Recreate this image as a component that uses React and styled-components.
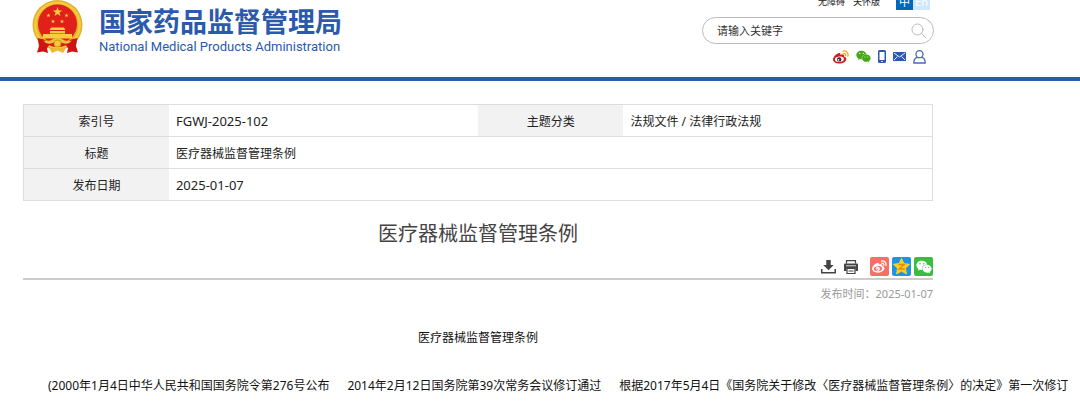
import React from "react";
import styled, { createGlobalStyle } from "styled-components";
import { FaWeixin } from "react-icons/fa";

const GlobalStyle = createGlobalStyle`
  * { box-sizing: border-box; }
  body {
    margin: 0;
    background: #fff;
    color: #222;
    font: 12px/24px "Noto Sans", "Noto Sans CJK SC", sans-serif;
    overflow: hidden;
  }
  a { color: inherit; text-decoration: none; }
`;

const Header = styled.header`
  border-bottom: 4px solid #2b5aab;
  padding: 0 146px 13px 23px;
  overflow: hidden;
`;

const HeaderInner = styled.div`
  display: flex;
  justify-content: space-between;
  align-items: flex-start;
`;

const Brand = styled.a`
  display: flex;
  align-items: flex-start;
  gap: 16px;
  padding-left: 9px;
  color: #2b5aab;
`;

const BrandText = styled.span`
  display: flex;
  flex-direction: column;
  padding-top: 4px;
  white-space: nowrap;
`;

const BrandName = styled.strong`
  font: 700 27px/34px "Noto Sans CJK SC", sans-serif;
`;

const BrandEnglish = styled.span`
  font: 400 13px/18px Roboto, "Liberation Sans", sans-serif;
`;

const Side = styled.div`
  display: flex;
  flex-direction: column;
  align-items: flex-end;
  width: 232px;
`;

const Utility = styled.nav`
  display: flex;
  align-items: center;
  gap: 8px;
  height: 16px;
  margin-top: -6px;
  padding-right: 4px;
  font-size: 9px;
  line-height: 16px;
`;

const Languages = styled.span`
  display: flex;
  margin-left: 8px;
`;

const Language = styled.a`
  width: 17px;
  text-align: center;
  font-size: 11px;
  color: #fff;
  background: ${(p) => (p.$active ? "#0068b7" : "#cfe8ff")};
`;

const SearchForm = styled.form`
  display: flex;
  align-items: center;
  width: 100%;
  height: 27px;
  margin-top: 7px;
  padding: 0 6px 0 14px;
  border: 1px solid #bbb;
  border-radius: 14px;
`;

const SearchInput = styled.input`
  flex: 1;
  min-width: 0;
  height: 20px;
  padding: 0 0 2px;
  border: 0;
  outline: 0;
  background: transparent;
  font: 11px/18px "Noto Sans CJK SC", sans-serif;
  &::placeholder { color: #333; opacity: 1; }
`;

const IconButton = styled.button`
  display: flex;
  padding: 0;
  border: 0;
  background: transparent;
  color: ${(p) => p.$color || "#444"};
  cursor: pointer;
`;

const Channels = styled.nav`
  display: flex;
  align-items: center;
  gap: 7px;
  margin-top: 5px;
  padding-right: 8px;
  a { display: flex; }
`;

const Main = styled.main`
  padding: 23px 147px 0 23px;
`;

const InfoTable = styled.table`
  width: 100%;
  table-layout: fixed;
  border-collapse: collapse;
  border: 1px solid #ddd;
  tr { border-bottom: 1px solid #ddd; }
  th, td { height: 32px; padding: 2px 7px 0; line-height: 24px; }
  th { width: 16%; background: #f2f2f2; font-weight: 400; text-align: center; }
  td { text-align: left; }
`;

const Code = styled.span`
  font-size: 13px;
`;

const Title = styled.h1`
  margin: 17px 0 0;
  font-size: 20px;
  line-height: 32px;
  font-weight: 400;
  text-align: center;
  color: #444;
`;

const Tools = styled.div`
  display: flex;
  justify-content: flex-end;
  align-items: center;
  gap: 8px;
  margin-top: 7px;
  padding-bottom: 2px;
  border-bottom: 2px solid #ccc;
`;

const ShareGroup = styled.div`
  display: flex;
  gap: 3px;
  margin-left: 4px;
`;

const ShareButton = styled.button`
  display: flex;
  align-items: center;
  justify-content: center;
  width: 19px;
  height: 19px;
  padding: 0;
  border: 0;
  border-radius: 2px;
  color: #fff;
  background: ${(p) => p.$bg};
  cursor: pointer;
`;

const Published = styled.p`
  margin: 2px 0 0;
  font-size: 11px;
  text-align: right;
  color: #999;
`;

const Article = styled.article`
  padding-top: 20px;
  color: #111;
`;

const Heading = styled.p`
  margin: 0 0 24px;
  text-align: center;
`;

const History = styled.p`
  display: flex;
  gap: 18px;
  margin: 0;
  padding-left: 25px;
  white-space: nowrap;
`;

function Emblem() {
  const star = "M0-5 1.2-1.6 4.8-1.6 1.9.6 3 4 0 1.9-3 4-1.9.6-4.8-1.6-1.2-1.6Z";
  return (
    <svg width="51" height="54" viewBox="0 0 51 54" role="img" aria-label="国徽">
      <circle cx="25.5" cy="25" r="25" fill="#e3b02b" />
      <circle cx="25.5" cy="25" r="22.2" fill="none" stroke="#f2cb42" strokeWidth="2.500" />
      <circle cx="25.5" cy="24" r="19.500" fill="#e02019" />
      <g fill="#f6cf3f">
        <path d={star} transform="translate(25.5 12)" />
        <path d={star} transform="translate(16.5 15.5) scale(.45)" />
        <path d={star} transform="translate(34.5 15.5) scale(.45)" />
        <path d={star} transform="translate(21 21.5) scale(.45)" />
        <path d={star} transform="translate(30 21.5) scale(.45)" />
        <path d="M19 27.500h13l1.500 2.500h-16zM18 31h15v2.500H18zM11 34h29v4.500H11z" />
      </g>
      <path d="M5.500 38 12 39.500 18 44 15 48 16 53 11 51.500 5 52.500 7 46ZM45.500 38 39 39.500 33 44 36 48 35 53 40 51.500 46 52.500 44 46Z" fill="#cf1512" />
      <path d="M13 42q6 0 8-2l4.500 1.500L30 40q2 2 8 2-4 5-12.500 5T13 42Z" fill="#d81c16" />
      <path d="M11 40.500q6 1.500 10-1.500 4.500-2.500 9 0 4 3 10 1.500-4 5-9.500 2.500-5-2.500-10 0-5.500 2.500-9.500-2.500Z" fill="#ecc03a" />
      <circle cx="25.500" cy="43.500" r="3.500" fill="#f3ca3c" stroke="#d39522" />
      <path d="M17 48q4.500 1 8.500-.5 4 1.500 8.500.5l-3 5-5.500-2.500-5.500 2.500Z" fill="#eeb930" />
    </svg>
  );
}

function Weibo({ width = 16, height = 14, body, wave, eye, pupil }) {
  return (
    <svg width={width} height={height} viewBox="0 0 16 14" aria-hidden="true">
      <path d="M5.400 3.200C7 2.600 7.800 3.500 7.400 4.900c1.900-.8 4.100-.5 3.700 1.600 1.400.5 2.200 1.300 2.200 2.500 0 2.500-3.100 4.600-6.800 4.600S0 11.900 0 9.500s2.900-5.500 5.400-6.300Z" fill={body} />
      <ellipse cx="6.400" cy="9.300" rx="4.500" ry="2.700" fill={eye} transform="rotate(-7 6.400 9.300)" />
      <circle cx="6.200" cy="9.400" r="2.200" fill={pupil} />
      <circle cx="5.500" cy="9.900" r=".8" fill={eye} />
      <circle cx="7" cy="8.900" r=".4" fill={eye} />
      <path d="M10 1.100c3.300-.7 5.700 1.800 4.900 5M10.300 3.500c1.600-.4 2.700.8 2.300 2.200" fill="none" stroke={wave} strokeWidth="1.300" strokeLinecap="round" />
    </svg>
  );
}

function SearchIcon() {
  return (
    <svg width="16" height="16" viewBox="0 0 16 16" fill="none" stroke="currentColor" strokeLinecap="round" aria-hidden="true">
      <circle cx="6.500" cy="6.500" r="5.500" />
      <path d="m10.500 10.500 4.500 4.500" />
    </svg>
  );
}

function Phone() {
  return (
    <svg width="8" height="13" viewBox="0 0 8 13" aria-hidden="true">
      <rect width="8" height="13" rx="1.500" fill="#2b5aab" />
      <path d="M1.500 2h5v8h-5zM3.200 11h1.600v1H3.200z" fill="#fff" />
    </svg>
  );
}

function Mail() {
  return (
    <svg width="13" height="9" viewBox="0 0 13 9" aria-hidden="true">
      <rect width="13" height="9" rx=".5" fill="#2b5aab" />
      <path d="m1 1 5.500 4L12 1M1 8l3.500-3.500M12 8 8.500 4.500" fill="none" stroke="#fff" strokeWidth=".9" />
    </svg>
  );
}

function Person() {
  return (
    <svg width="13" height="14" viewBox="0 0 13 14" fill="none" stroke="#4768b0" strokeWidth="1.300" aria-hidden="true">
      <circle cx="6.500" cy="4.200" r="3.500" />
      <path d="M4.300 7.200C2 8 .8 9.800.8 13h11.400c0-3.200-1.200-5-3.500-5.800" strokeLinejoin="round" />
    </svg>
  );
}

function Download() {
  return (
    <svg width="15" height="14" viewBox="0 0 15 14" fill="currentColor" aria-hidden="true">
      <path d="M5.300 0h4.400v5h3L7.500 10.200 2.300 5h3zM0 9h1.500v3h12V9H15v4.500H0z" />
    </svg>
  );
}

function Printer() {
  return (
    <svg width="14" height="14" viewBox="0 0 14 14" aria-hidden="true">
      <path d="M2.500 3.500V.6h9v2.900" fill="none" stroke="currentColor" strokeWidth="1.200" />
      <path d="M1 3.500h12q1 0 1 1V11h-2.500V8h-9v3H0V4.500q0-1 1-1Z" fill="currentColor" />
      <path d="M3 8.500h8v5H3z" fill="#fff" stroke="currentColor" strokeWidth="1.200" />
      <path d="M4.500 11h5" stroke="currentColor" />
      <path d="M2 5.800h10" stroke="#fff" strokeWidth=".8" />
    </svg>
  );
}

function Qzone() {
  return (
    <svg width="17" height="17" viewBox="0 0 17 17" aria-hidden="true">
      <path d="m8.500.5 2.400 5.100 5.600.7-4.100 3.900 1 5.700-4.900-2.800-4.900 2.800 1-5.700L.5 6.300l5.600-.7Z" fill="#ffce22" strokeLinejoin="round" stroke="#ffce22" />
      <path d="M5.300 6.500h6L6 11h5.700" fill="none" stroke="#e08a00" strokeWidth="1.300" />
    </svg>
  );
}

export default function App() {
  return (
    <>
      <GlobalStyle />
      <Header>
        <HeaderInner>
          <Brand href="#">
            <Emblem />
            <BrandText>
              <BrandName>国家药品监督管理局</BrandName>
              <BrandEnglish>National Medical Products Administration</BrandEnglish>
            </BrandText>
          </Brand>
          <Side>
            <Utility>
              <a href="#">无障碍</a>
              <a href="#">关怀版</a>
              <Languages>
                <Language href="#" $active>中</Language>
                <Language href="#">En</Language>
              </Languages>
            </Utility>
            <SearchForm role="search" onSubmit={(e) => e.preventDefault()}>
              <SearchInput type="text" aria-label="请输入关键字" placeholder="请输入关键字" />
              <IconButton type="submit" aria-label="搜索" $color="#bbb"><SearchIcon /></IconButton>
            </SearchForm>
            <Channels>
              <a href="#" aria-label="微博"><Weibo body="#d8161b" wave="#f5a51c" eye="#fff" pupil="#222" /></a>
              <a href="#" aria-label="微信"><FaWeixin size={15} color="#43a716" /></a>
              <a href="#" aria-label="手机"><Phone /></a>
              <a href="#" aria-label="邮箱"><Mail /></a>
              <a href="#" aria-label="用户"><Person /></a>
            </Channels>
          </Side>
        </HeaderInner>
      </Header>
      <Main>
        <InfoTable>
          <tbody>
            <tr>
              <th scope="row">索引号</th>
              <td><Code>FGWJ-2025-102</Code></td>
              <th scope="row">主题分类</th>
              <td>法规文件 / 法律行政法规</td>
            </tr>
            <tr>
              <th scope="row">标题</th>
              <td colSpan={3}>医疗器械监督管理条例</td>
            </tr>
            <tr>
              <th scope="row">发布日期</th>
              <td colSpan={3}><Code>2025-01-07</Code></td>
            </tr>
          </tbody>
        </InfoTable>
        <Title>医疗器械监督管理条例</Title>
        <Tools>
          <IconButton type="button" aria-label="下载"><Download /></IconButton>
          <IconButton type="button" aria-label="打印"><Printer /></IconButton>
          <ShareGroup>
            <ShareButton type="button" aria-label="分享到微博" $bg="#f56f65">
              <Weibo width={15} height={13} body="#fff" wave="#fff" eye="#f56f65" pupil="#fff" />
            </ShareButton>
            <ShareButton type="button" aria-label="分享到QQ空间" $bg="#1f94e4"><Qzone /></ShareButton>
            <ShareButton type="button" aria-label="分享到微信" $bg="#3bbd3f"><FaWeixin size={16} /></ShareButton>
          </ShareGroup>
        </Tools>
        <Published>发布时间：2025-01-07</Published>
        <Article>
          <Heading>医疗器械监督管理条例</Heading>
          <History>
            <span>(2000年1月4日中华人民共和国国务院令第276号公布</span>
            <span>2014年2月12日国务院第39次常务会议修订通过</span>
            <span>根据2017年5月4日《国务院关于修改〈医疗器械监督管理条例〉的决定》第一次修订</span>
          </History>
        </Article>
      </Main>
    </>
  );
}
